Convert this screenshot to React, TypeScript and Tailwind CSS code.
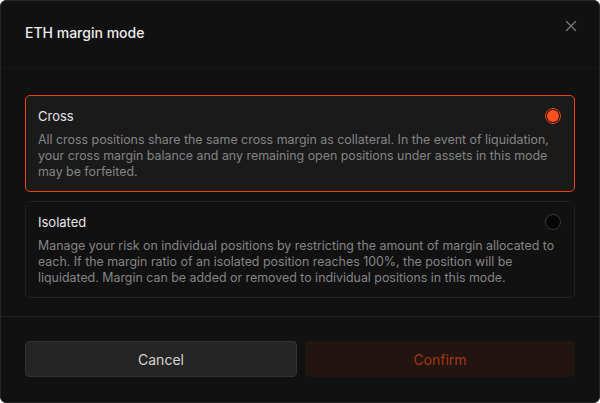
import React from "react";

export default function App() {
  const font = { fontFamily: "Inter, 'Noto Sans', sans-serif" };
  return (
    <div style={font} className="w-[600px] h-[403px] bg-[#111111] border border-[#262626] rounded-[6px] flex flex-col overflow-hidden">
      <div className="h-[67px] flex items-start justify-between px-[24px] pt-[23px] border-b border-[#181818]">
        <div className="text-[14px] leading-[18px] font-medium text-[#ececec]">ETH margin mode</div>
        <svg width="12" height="12" viewBox="0 0 12 12" className="mt-[-4px] mr-[-2px]">
          <path d="M1.5 1.5 L10.5 10.5 M10.5 1.5 L1.5 10.5" stroke="#7a7a7a" strokeWidth="1.3" strokeLinecap="round" />
        </svg>
      </div>
      <div className="px-[24px] pt-[27px] pb-[18px] flex flex-col gap-[9px] border-b border-[#262626]">
        <div className="rounded-[5px] border border-[#f0420f] bg-[#1a1a1a] px-[12px] pt-[12px] pb-[11px] h-[97px]">
          <div className="flex items-center justify-between">
            <div className="text-[13px] leading-[16px] text-[#e6e6e6]">Cross</div>
            <div className="w-[16px] h-[16px] rounded-full border border-[#f0420f] bg-[#141414] flex items-center justify-center mr-[1px]">
              <div className="w-[12px] h-[12px] rounded-full bg-[#ff4f1f]" />
            </div>
          </div>
          <div className="mt-[8px] text-[12.4px] leading-[16px] text-[#858585]">
            All cross positions share the same cross margin as collateral. In the event of liquidation, your cross margin balance and any remaining open positions under assets in this mode may be forfeited.
          </div>
        </div>
        <div className="rounded-[5px] border border-[#222222] bg-[#111111] px-[12px] pt-[12px] pb-[11px] h-[97px]">
          <div className="flex items-center justify-between">
            <div className="text-[13px] leading-[16px] text-[#e6e6e6]">Isolated</div>
            <div className="w-[16px] h-[16px] rounded-full border border-[#383838] bg-[#050505] mr-[1px]" />
          </div>
          <div className="mt-[8px] text-[12.4px] leading-[16px] text-[#858585]">
            Manage your risk on individual positions by restricting the amount of margin allocated to each. If the margin ratio of an isolated position reaches 100%, the position will be liquidated. Margin can be added or removed to individual positions in this mode.
          </div>
        </div>
      </div>
      <div className="px-[24px] pt-[24px] flex gap-[8px]">
        <button className="flex-1 h-[36px] rounded-[4px] bg-[#252525] border border-[#333333] text-[14px] text-[#d4d4d4]">Cancel</button>
        <button className="flex-1 h-[36px] rounded-[4px] bg-[#211411] text-[14px] text-[#a4380f]">Confirm</button>
      </div>
    </div>
  );
}
